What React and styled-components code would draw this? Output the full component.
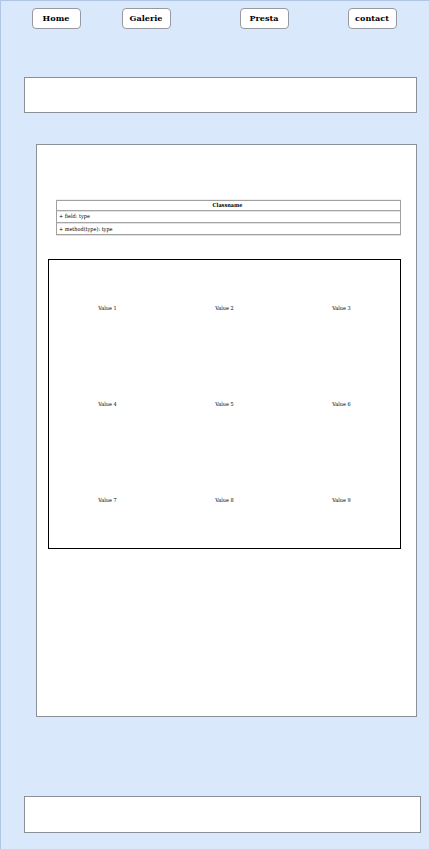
import React from "react";
import styled, { createGlobalStyle } from "styled-components";

const GlobalStyle = createGlobalStyle`
  *, *::before, *::after { box-sizing: border-box; }
  body { margin: 0; background: #dae8fc; }
`;

const Page = styled.div`
  width: 429px;
  height: 849px;
  overflow: hidden;
  display: flex;
  flex-direction: column;
  background: #dae8fc;
  border-top: 1px solid #b1c5e6;
  border-left: 1px solid #b1c5e6;
  padding: 7px 0 0 23px;
  font-family: "DejaVu Serif", serif;
  color: #000;
`;

const Nav = styled.nav`
  display: grid;
  grid-template-columns: 90px 118px 108px 49px;
  margin-left: 8px;
`;

const NavButton = styled.button`
  width: 49px;
  height: 21px;
  padding: 0 1px 0 0;
  border: 1px solid #96999f;
  border-radius: 4px;
  background: #fff;
  color: #000;
  font: bold 8.1px/19px "DejaVu Serif", serif;
  text-align: center;
  white-space: nowrap;
`;

const Banner = styled.div`
  flex: none;
  width: ${(p) => p.$width}px;
  height: ${(p) => p.$height}px;
  border: 1px solid #8b9097;
  background: #fff;
`;

const Header = styled(Banner).attrs({ as: "header" })`
  margin-top: 48px;
`;

const Footer = styled(Banner).attrs({ as: "footer" })`
  margin-top: 79px;
`;

const Main = styled.main`
  flex: none;
  width: 381px;
  height: 573px;
  margin: 31px 0 0 12px;
  padding: 55px 15px 0 11px;
  border: 1px solid #8b9297;
  background: #fff;
`;

const ClassBox = styled.section`
  width: 345px;
  margin-left: 8px;
  border: 1px solid #a0a0a0;
  box-shadow: 0 -1px #efefef, 0 1px #e2e2e2;
  font-family: "DejaVu Serif Condensed", "DejaVu Serif", serif;
  font-stretch: condensed;
  font-size: 5.5px;
`;

const ClassTitle = styled.h2`
  height: 9px;
  margin: 0;
  padding-right: 2px;
  font-size: 5.5px;
  line-height: 9px;
  text-align: center;
`;

const ClassRow = styled.div`
  height: 12px;
  padding-left: 2px;
  border-top: 1px solid #a6a6a6;
  box-shadow: inset 0 1px #e2e2e2;
  line-height: ${(p) => p.$lineHeight}px;
  white-space: pre;
`;

const ValueGrid = styled.section`
  display: grid;
  grid-template-columns: repeat(3, 1fr);
  grid-template-rows: repeat(3, 96px);
  width: 353px;
  height: 290px;
  margin-top: 24px;
  border: 1px solid #000;
`;

const Value = styled.div`
  display: flex;
  align-items: center;
  justify-content: center;
  font-family: "DejaVu Serif Condensed", "DejaVu Serif", serif;
  font-stretch: condensed;
  font-size: 5.5px;
  line-height: 8px;
`;

const links = ["Home", "Galerie", "Presta", "contact"];
const values = [1, 2, 3, 4, 5, 6, 7, 8, 9];

export default function App() {
  return (
    <>
      <GlobalStyle />
      <Page>
        <Nav>
          {links.map((label) => (
            <NavButton key={label}>{label}</NavButton>
          ))}
        </Nav>
        <Header $width={393} $height={36} />
        <Main>
          <ClassBox>
            <ClassTitle>Classname</ClassTitle>
            <ClassRow $lineHeight={11}>+ field: type</ClassRow>
            <ClassRow $lineHeight={13}>+ method(type): type</ClassRow>
          </ClassBox>
          <ValueGrid>
            {values.map((n) => (
              <Value key={n}>Value {n}</Value>
            ))}
          </ValueGrid>
        </Main>
        <Footer $width={397} $height={37} />
      </Page>
    </>
  );
}
